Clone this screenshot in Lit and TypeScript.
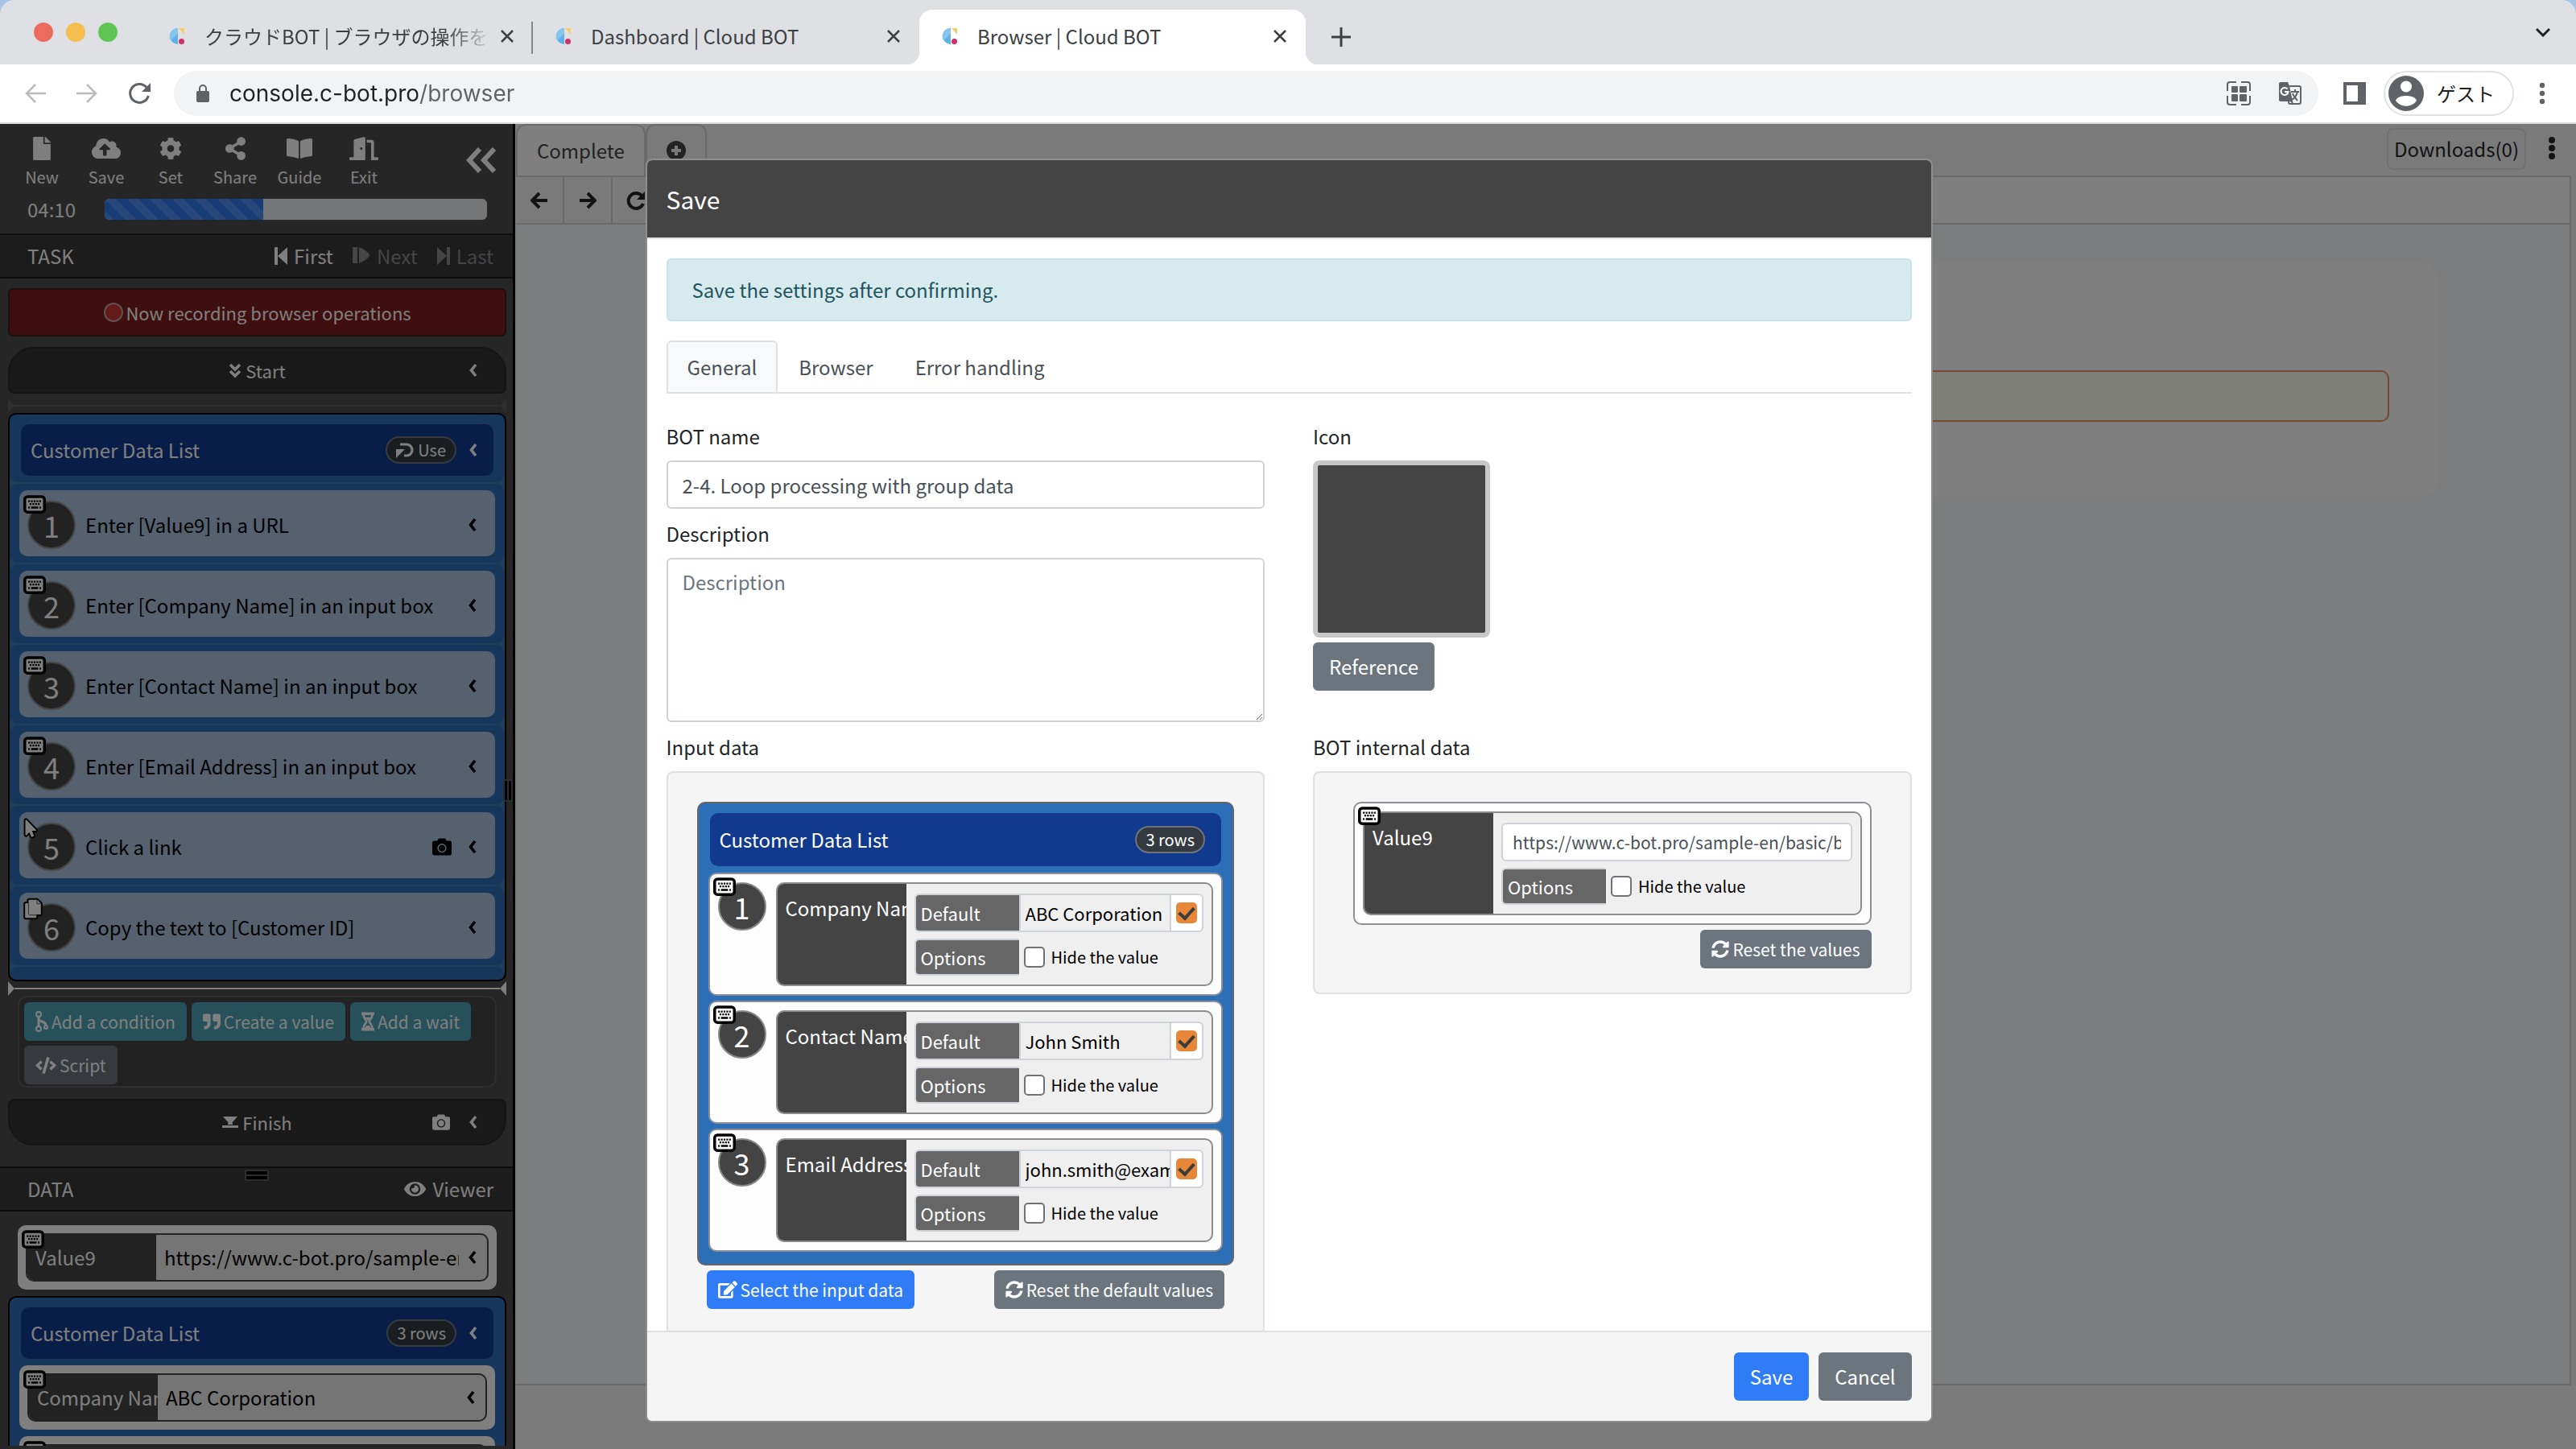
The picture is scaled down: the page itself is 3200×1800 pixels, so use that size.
import { LitElement, html, svg, css, nothing } from "lit";
import { customElement } from "lit/decorators.js";
import { classMap } from "lit/directives/class-map.js";

type Glyph = { box: string; body: unknown };

const p = (d: string) => svg`<path d=${d} fill="currentColor" fill-rule="evenodd"></path>`;

const GLYPHS: Record<string, Glyph> = {
  file: { box: "0 0 384 512", body: p("M224 136V0H24C10.7 0 0 10.7 0 24v464c0 13.3 10.7 24 24 24h336c13.3 0 24-10.7 24-24V160H248c-13.2 0-24-10.8-24-24zm160-14.1v6.1H256V0h6.1c6.4 0 12.5 2.5 17 7l97.9 98c4.5 4.5 7 10.6 7 16.9z") },
  cloud: { box: "0 0 640 512", body: p("M537.6 226.6c4.1-10.7 6.4-22.4 6.4-34.6 0-53-43-96-96-96-19.7 0-38.1 6-53.3 16.2C367 64.2 315.3 32 256 32c-88.4 0-160 71.6-160 160 0 2.7.1 5.4.2 8.1C40.2 219.8 0 273.2 0 336c0 79.5 64.5 144 144 144h368c70.7 0 128-57.3 128-128 0-61.9-44-113.6-102.4-125.4zM393.4 288H328v112c0 8.8-7.2 16-16 16h-48c-8.8 0-16-7.2-16-16V288h-65.4c-14.3 0-21.4-17.2-11.3-27.3l105.4-105.4c6.2-6.2 16.4-6.2 22.6 0l105.4 105.4c10.1 10.1 2.9 27.3-11.3 27.3z") },
  cog: { box: "0 0 512 512", body: p("M487.4 315.7l-42.6-24.6c4.3-23.2 4.3-47 0-70.2l42.6-24.6c4.9-2.8 7.1-8.6 5.5-14-11.1-35.6-30-67.8-54.7-94.6-3.8-4.1-10-5.1-14.8-2.3L380.8 110c-17.9-15.4-38.5-27.3-60.8-35.1V25.8c0-5.6-3.9-10.5-9.4-11.7-36.7-8.2-74.3-7.8-109.2 0-5.5 1.2-9.4 6.1-9.4 11.7V75c-22.2 7.9-42.8 19.8-60.8 35.1L88.7 85.5c-4.9-2.8-11-1.9-14.8 2.3-24.7 26.7-43.6 58.9-54.7 94.6-1.7 5.4.6 11.2 5.5 14L67.3 221c-4.3 23.2-4.3 47 0 70.2l-42.6 24.6c-4.9 2.8-7.1 8.6-5.5 14 11.1 35.6 30 67.8 54.7 94.6 3.8 4.1 10 5.1 14.8 2.3l42.6-24.6c17.9 15.4 38.5 27.3 60.8 35.1v49.2c0 5.6 3.9 10.5 9.4 11.7 36.7 8.2 74.3 7.8 109.2 0 5.5-1.2 9.4-6.1 9.4-11.7v-49.2c22.2-7.9 42.8-19.8 60.8-35.1l42.6 24.6c4.9 2.8 11 1.9 14.8-2.3 24.7-26.7 43.6-58.9 54.7-94.6 1.5-5.5-.7-11.3-5.6-14.1zM256 336c-44.1 0-80-35.9-80-80s35.9-80 80-80 80 35.9 80 80-35.9 80-80 80z") },
  share: { box: "0 0 448 512", body: p("M352 320c-22.608 0-43.387 7.819-59.79 20.895l-102.486-64.054a96.551 96.551 0 0 0 0-41.683l102.486-64.054C308.613 184.181 329.392 192 352 192c53.019 0 96-42.981 96-96S405.019 0 352 0s-96 42.981-96 96c0 7.158.79 14.13 2.276 20.841L155.79 180.895C139.387 167.819 118.608 160 96 160c-53.019 0-96 42.981-96 96s42.981 96 96 96c22.608 0 43.387-7.819 59.79-20.895l102.486 64.054A96.301 96.301 0 0 0 256 416c0 53.019 42.981 96 96 96s96-42.981 96-96-42.981-96-96-96z") },
  book: { box: "0 0 576 512", body: p("M542.22 32.05c-54.8 3.11-163.72 14.43-230.96 55.59-4.64 2.84-7.27 7.89-7.27 13.17v363.87c0 11.55 12.63 18.85 23.28 13.49 69.18-34.82 169.23-44.32 218.7-46.92 16.89-.89 30.02-14.43 30.02-30.66V62.75c.01-17.71-15.35-31.74-33.77-30.7zM264.73 87.64C197.5 46.48 88.58 35.17 33.78 32.05 15.36 31.01 0 45.04 0 62.75V400.6c0 16.24 13.13 29.78 30.02 30.66 49.49 2.6 149.59 12.11 218.77 46.95 10.62 5.35 23.21-1.94 23.21-13.46V100.63c0-5.29-2.62-10.14-7.27-12.99z") },
  door: { box: "0 0 640 512", body: p("M624 448h-80V113.5C544 86.2 522.5 64 496 64H384v64h96v384h144c8.8 0 16-7.2 16-16v-32c0-8.8-7.2-16-16-16zM312.2 1l-192 49.9C106 54.7 96 67.8 96 82.8V448H16c-8.8 0-16 7.2-16 16v32c0 8.8 7.2 16 16 16h336V33.2c0-21.6-19.6-37.4-39.8-32.2zM264 288c-13.3 0-24-14.3-24-32s10.7-32 24-32 24 14.3 24 32-10.7 32-24 32z") },
  camera: { box: "0 0 512 512", body: p("M512 144v288c0 26.5-21.5 48-48 48H48c-26.5 0-48-21.5-48-48V144c0-26.5 21.5-48 48-48h88l12.3-32.9c7-18.7 24.9-31.1 44.9-31.1h125.5c20 0 37.9 12.4 44.9 31.1L376 96h88c26.5 0 48 21.5 48 48zM376 288c0-66.2-53.8-120-120-120s-120 53.8-120 120 53.8 120 120 120 120-53.8 120-120zm-32 0c0 48.5-39.5 88-88 88s-88-39.5-88-88 39.5-88 88-88 88 39.5 88 88z") },
  eye: { box: "0 0 576 512", body: p("M572.52 241.4C518.29 135.59 410.93 64 288 64S57.68 135.64 3.48 241.41a32.35 32.35 0 0 0 0 29.19C57.71 376.41 165.07 448 288 448s230.32-71.64 284.52-177.41a32.35 32.35 0 0 0 0-29.19zM288 400a144 144 0 1 1 144-144 143.93 143.93 0 0 1-144 144zm0-240a95.31 95.31 0 0 0-25.31 3.79 47.85 47.85 0 0 1-66.9 66.9A95.78 95.78 0 1 0 288 160z") },
  quote: { box: "0 0 512 512", body: p("M464 32H336c-26.5 0-48 21.5-48 48v128c0 26.5 21.5 48 48 48h80v64c0 35.3-28.7 64-64 64h-8c-13.3 0-24 10.7-24 24v48c0 13.3 10.7 24 24 24h8c88.4 0 160-71.6 160-160V80c0-26.5-21.5-48-48-48zm-288 0H48C21.5 32 0 53.5 0 80v128c0 26.5 21.5 48 48 48h80v64c0 35.3-28.7 64-64 64h-8c-13.3 0-24 10.7-24 24v48c0 13.3 10.7 24 24 24h8c88.4 0 160-71.6 160-160V80c0-26.5-21.5-48-48-48z") },
  edit: { box: "0 0 576 512", body: p("M402.6 83.2l90.2 90.2c3.8 3.8 3.8 10 0 13.8L274.4 405.6l-92.8 10.3c-12.4 1.4-22.9-9.1-21.5-21.5l10.3-92.8L388.8 83.2c3.8-3.8 10-3.8 13.8 0zm162-22.9l-48.8-48.8c-15.2-15.2-39.9-15.2-55.2 0l-35.4 35.4c-3.8 3.8-3.8 10 0 13.8l90.2 90.2c3.8 3.8 10 3.8 13.8 0l35.4-35.4c15.2-15.3 15.2-40 0-55.2zM384 346.2V448H64V128h229.8c3.2 0 6.2-1.3 8.5-3.5l40-40c7.6-7.6 2.2-20.5-8.5-20.5H48C21.5 64 0 85.5 0 112v352c0 26.5 21.5 48 48 48h352c26.5 0 48-21.5 48-48V306.2c0-10.7-12.9-16-20.5-8.5l-40 40c-2.2 2.3-3.5 5.3-3.5 8.5z") },
  sync: { box: "0 0 512 512", body: p("M370.72 133.28C339.458 104.008 298.888 87.962 255.848 88c-77.458.068-144.328 53.178-162.791 126.85-1.344 5.363-6.122 9.15-11.651 9.15H24.103c-7.498 0-13.194-6.807-11.807-14.176C33.933 94.924 134.813 8 256 8c66.448 0 126.791 26.136 171.315 68.685L463.03 40.97C478.149 25.851 504 36.559 504 57.941V192c0 13.255-10.745 24-24 24H345.941c-21.382 0-32.09-25.851-16.971-40.971l41.75-41.749zM32 296h134.059c21.382 0 32.09 25.851 16.971 40.971l-41.75 41.75c31.262 29.273 71.835 45.319 114.876 45.28 77.418-.07 144.315-53.144 162.787-126.849 1.344-5.363 6.122-9.15 11.651-9.15h57.304c7.498 0 13.194 6.807 11.807 14.176C478.067 417.076 377.187 504 256 504c-66.448 0-126.791-26.136-171.315-68.685L48.97 471.03C33.851 486.149 8 475.441 8 454.059V320c0-13.255 10.745-24 24-24z") },
  code: { box: "0 0 640 512", body: p("M278.9 511.5l-61-17.7c-6.4-1.8-10-8.5-8.2-14.9L346.2 8.7c1.8-6.4 8.5-10 14.9-8.2l61 17.7c6.4 1.8 10 8.5 8.2 14.9L293.8 503.3c-1.9 6.4-8.5 10.1-14.9 8.2zm-114-112.2l43.5-46.4c4.6-4.9 4.3-12.7-.8-17.2L117 256l90.6-79.7c5.1-4.5 5.5-12.3.8-17.2l-43.5-46.4c-4.5-4.8-12.1-5.1-17-.5L3.8 247.2c-5.1 4.7-5.1 12.8 0 17.5l144.1 135.1c4.9 4.6 12.5 4.4 17-.5zm327.2.6l144.1-135.1c5.1-4.7 5.1-12.8 0-17.5L492.1 112.1c-4.8-4.5-12.4-4.3-17 .5L431.6 159c-4.6 4.9-4.3 12.7.8 17.2L523 256l-90.6 79.7c-5.1 4.5-5.5 12.3-.8 17.2l43.5 46.4c4.5 4.9 12.1 5.1 17 .6z") },
  branch: { box: "0 0 16 26", body: svg`<g fill="none" stroke="currentColor" stroke-width="2"><circle cx="4" cy="4" r="3"></circle><circle cx="4" cy="22" r="3"></circle><circle cx="13" cy="20" r="2"></circle><path d="M4 7v12M4 10c1 4 9 2 9 8" stroke-width="3"></path></g>` },
  hourglass: { box: "0 0 18 26", body: svg`<path d="M0 0h18v4H0zM0 22h18v4H0z" fill="currentColor"></path><path d="M3 4c0 5 4 7 4 9s-4 4-4 9M15 4c0 5-4 7-4 9s4 4 4 9" fill="none" stroke="currentColor" stroke-width="3"></path><path d="M5 7h8l-4 5zM5 22c1-5 7-5 8 0z" fill="currentColor"></path>` },
  keyboard: { box: "0 0 32 26", body: svg`<rect x="2" y="2" width="28" height="22" rx="4" fill="#fff" stroke="#000" stroke-width="4"></rect><path d="M7 8.500h18M9 12.500h14" stroke="#000" stroke-width="2.500" stroke-dasharray="2.500 1.400"></path><path d="M7 17.500h2M11 17.500h10M23 17.500h2" stroke="#000" stroke-width="3"></path>` },
  pointer: { box: "-60 -50 430 612", body: svg`<path d="M302 329H196l56 136c4 9 0 20-9 24l-49 21c-9 4-20-1-24-10l-53-129-86 89C19 473 0 464 0 448V18C0 2 20-6 30 5l285 293c11 11 3 31-13 31z" fill="#fff" stroke="#000" stroke-width="90" paint-order="stroke" stroke-linejoin="round"></path>` },
  copy: { box: "-50 -50 548 612", body: svg`<path d="M320 448v40c0 13-11 24-24 24H24c-13 0-24-11-24-24V120c0-13 11-24 24-24h72V24c0-13 11-24 24-24h224l104 104v288c0 13-11 24-24 24H320z" fill="#fff" stroke="#000" stroke-width="90" paint-order="stroke" stroke-linejoin="round"></path><path d="M96 96v296c0 31 25 40 40 40h184M336 0v112h112" fill="none" stroke="#444" stroke-width="20"></path>` },
  chevron: { box: "0 0 10 18", body: svg`<path d="M8 2L2.500 9 8 16" fill="none" stroke="currentColor" stroke-width="3.600"></path>` },
  collapse: { box: "0 0 38 32", body: svg`<path d="M17 2L4 16l13 14M35 2L22 16l13 14" fill="none" stroke="currentColor" stroke-width="6"></path>` },
  down: { box: "0 0 16 18", body: svg`<path d="M2 2l6 6 6-6M2 10l6 6 6-6" fill="none" stroke="currentColor" stroke-width="3.600"></path>` },
  finish: { box: "0 0 20 14", body: svg`<path d="M1 0h18l-7 8h-4zM0 11h20v3H0z" fill="currentColor"></path><path d="M7 8h6v2H7z" fill="currentColor"></path>` },
  first: { box: "0 0 16 22", body: svg`<path d="M0 0h4v22H0zM16 0v22L4 11z" fill="currentColor"></path>` },
  next: { box: "0 0 22 22", body: svg`<path d="M0 0h6v20H0zM8 0c8 3 13 8 13 10s-5 7-13 10z" fill="currentColor"></path>` },
  last: { box: "0 0 16 22", body: svg`<path d="M12 0h4v22h-4zM0 0v22l12-11z" fill="currentColor"></path>` },
  record: { box: "0 0 26 26", body: svg`<circle cx="13" cy="13" r="11" fill="#c43630" stroke="currentColor" stroke-width="2"></circle>` },
  loop: { box: "0 0 22 20", body: svg`<path d="M5 3h8a6 6 0 0 1 0 14H10" fill="none" stroke="currentColor" stroke-width="3.200"></path><path d="M0 9h11L0 20z" fill="currentColor"></path>` },
  plusDisc: { box: "0 0 24 24", body: svg`<circle cx="12" cy="12" r="12" fill="currentColor"></circle><path d="M12 6v12M6 12h12" stroke="#f4f4f4" stroke-width="4"></path>` },
  arrowLeft: { box: "0 0 22 22", body: svg`<path d="M21 11H3M11 2l-9 9 9 9" fill="none" stroke="currentColor" stroke-width="4"></path>` },
  arrowRight: { box: "0 0 22 22", body: svg`<path d="M1 11h18M11 2l9 9-9 9" fill="none" stroke="currentColor" stroke-width="4"></path>` },
  reloadBold: { box: "0 0 24 24", body: svg`<path d="M20 7a9.500 9.500 0 1 0 1 9" fill="none" stroke="currentColor" stroke-width="4"></path><path d="M23 1v10H13z" fill="currentColor"></path>` },
  navBack: { box: "0 0 26 26", body: svg`<path d="M26 13H2M13 2L2 13l11 11" fill="none" stroke="currentColor" stroke-width="2.500"></path>` },
  navForward: { box: "0 0 26 26", body: svg`<path d="M0 13h24M13 2l11 11-11 11" fill="none" stroke="currentColor" stroke-width="2.500"></path>` },
  reload: { box: "0 0 28 28", body: svg`<path d="M23 6.500A11.500 11.500 0 1 0 25.300 17" fill="none" stroke="currentColor" stroke-width="3"></path><path d="M28 1v11H17z" fill="currentColor"></path>` },
  lock: { box: "0 0 16 22", body: svg`<rect y="8" width="16" height="14" rx="2" fill="currentColor"></rect><path d="M4 9V5a4 4 0 0 1 8 0v4" fill="none" stroke="currentColor" stroke-width="2"></path>` },
  close: { box: "0 0 16 16", body: svg`<path d="M1 1l14 14M15 1L1 15" stroke="currentColor" stroke-width="2.500"></path>` },
  plus: { box: "0 0 24 24", body: svg`<path d="M12 0v24M0 12h24" stroke="currentColor" stroke-width="3"></path>` },
  menuDown: { box: "0 0 18 12", body: svg`<path d="M1 2l8 8 8-8" fill="none" stroke="currentColor" stroke-width="3"></path>` },
  dots: { box: "0 0 8 28", body: svg`<g fill="currentColor"><circle cx="4" cy="4" r="3.200"></circle><circle cx="4" cy="14" r="3.200"></circle><circle cx="4" cy="24" r="3.200"></circle></g>` },
  dotsBold: { box: "0 0 8 28", body: svg`<g fill="currentColor"><circle cx="4" cy="4" r="4"></circle><circle cx="4" cy="14" r="4"></circle><circle cx="4" cy="24" r="4"></circle></g>` },
  qr: { box: "0 0 30 30", body: svg`<path d="M1 12V4a3 3 0 0 1 3-3h8M18 1h8a3 3 0 0 1 3 3v8M29 18v8a3 3 0 0 1-3 3h-8M12 29H4a3 3 0 0 1-3-3v-8" fill="none" stroke="currentColor" stroke-width="2"></path><g fill="currentColor"><rect x="6" y="6" width="8" height="8" rx="1"></rect><rect x="16" y="6" width="9" height="8" rx="1"></rect><rect x="6" y="16" width="8" height="9" rx="1"></rect><rect x="16" y="16" width="9" height="9" rx="1"></rect></g>` },
  translate: { box: "0 0 28 28", body: svg`<rect x="12" y="5" width="15" height="22" rx="2" fill="none" stroke="currentColor" stroke-width="2"></rect><path d="M15 12h10M20 9v3M23 12c-1 5-4 8-7 10M17 14c1 4 4 6 6 9" fill="none" stroke="currentColor" stroke-width="2"></path><path d="M2 0h9l2 5 5 23-4-4H2a2 2 0 0 1-2-2V2a2 2 0 0 1 2-2z" fill="currentColor"></path><path d="M10.500 8.500A4.500 4.500 0 1 0 11.500 12H7" fill="none" stroke="#fff" stroke-width="2"></path>` },
  panel: { box: "0 0 28 28", body: svg`<path d="M0 0h28v28H0zM4 4v20h14V4z" fill="currentColor" fill-rule="evenodd"></path>` },
  avatar: { box: "0 0 44 44", body: svg`<circle cx="22" cy="22" r="22" fill="currentColor"></circle><circle cx="22" cy="13.500" r="7" fill="#fff"></circle><path d="M9 31c2-8 24-8 26 0-6 9-20 9-26 0z" fill="#fff"></path>` },
  brand: { box: "0 0 20 20", body: svg`<path d="M11 0A10 10 0 0 0 11 20z" fill="#5db2e6"></path><path d="M11 0A10 10 0 0 0 2 15L11 7z" fill="#86c5ec"></path><path d="M12 0h7v8z" fill="#f3cf63"></path><circle cx="15.500" cy="16.500" r="3.500" fill="#d32d6c"></circle>` },
};

const icon = (name: string, w: number, h: number) =>
  html`<svg class="icon" width=${w} height=${h} viewBox=${GLYPHS[name].box} aria-hidden="true">${GLYPHS[name].body}</svg>`;

const SITE = "https://www.c-bot.pro/sample-en/basic/b";

const BROWSER_TABS = [
  { title: "クラウドBOT | ブラウザの操作を自", active: false },
  { title: "Dashboard | Cloud BOT", active: false },
  { title: "Browser | Cloud BOT", active: true },
];

const TOOLS = [
  { label: "New", glyph: "file", w: 22 },
  { label: "Save", glyph: "cloud", w: 36 },
  { label: "Set", glyph: "cog", w: 28 },
  { label: "Share", glyph: "share", w: 25 },
  { label: "Guide", glyph: "book", w: 32 },
  { label: "Exit", glyph: "door", w: 36 },
];

const STEPS = [
  { text: "Enter [Value9] in a URL", badge: "keyboard", shot: false },
  { text: "Enter [Company Name] in an input box", badge: "keyboard", shot: false },
  { text: "Enter [Contact Name] in an input box", badge: "keyboard", shot: false },
  { text: "Enter [Email Address] in an input box", badge: "keyboard", shot: false },
  { text: "Click a link", badge: "pointer", shot: true },
  { text: "Copy the text to [Customer ID]", badge: "copy", shot: false },
];

const BADGE_SIZE: Record<string, [number, number]> = {
  keyboard: [28, 23],
  pointer: [18, 28],
  copy: [24, 28],
};

const FIELDS = [
  { name: "Company Name", value: "ABC Corporation" },
  { name: "Contact Name", value: "John Smith" },
  { name: "Email Address", value: "john.smith@example.com" },
];

@customElement("app-root")
export class AppRoot extends LitElement {
  static styles = css`
    :host {
      display: flex;
      flex-direction: column;
      height: 100vh;
      overflow: hidden;
      background: #a9c4e6;
      font-family: "Noto Sans CJK JP", "Noto Sans", sans-serif;
      font-size: 24px;
      line-height: 36px;
      color: #212529;
    }
    * { box-sizing: border-box; }
    button, input, textarea { font: inherit; color: inherit; margin: 0; }
    button { border: 0; padding: 0; background: none; display: flex; align-items: center; white-space: nowrap; }
    .icon { display: block; flex: none; }
    .grow { flex: 1; min-width: 0; }

    /* browser chrome */
    .tabstrip { display: flex; align-items: flex-end; height: 80px; background: #dee0e4; color: #3c4043; border-radius: 18px 18px 0 0; flex: none; }
    .lights { display: flex; gap: 16px; padding: 0 36px 0 42px; height: 80px; align-items: center; }
    .light { width: 24px; height: 24px; border-radius: 50%; background: #ed6a5f; }
    .light.amber { background: #f5bf4f; }
    .light.green { background: #61c554; }
    .tab { position: relative; display: flex; align-items: center; width: 15%; height: 68px; padding: 0 24px 2px 28px; gap: 24px; border-radius: 16px 16px 0 0; }
    .tab.ruled::after { content: ""; position: absolute; right: 0; top: 15px; width: 2px; height: 40px; background: #85888c; }
    .tab.active { background: #fff; }
    .tab.active::before, .tab.active::after { content: ""; position: absolute; bottom: 0; width: 16px; height: 16px; }
    .tab.active::before { left: -16px; background: radial-gradient(circle at 0 0, transparent 16px, #fff 17px); }
    .tab.active::after { right: -16px; background: radial-gradient(circle at 100% 0, transparent 16px, #fff 17px); }
    .tabname { flex: 1; min-width: 0; overflow: hidden; white-space: nowrap; margin-right: -8px; }
    .tabname.fade { -webkit-mask-image: linear-gradient(90deg, #000 85%, transparent 102%); }
    .newtab { height: 68px; padding: 0 32px; }
    .tabmenu { height: 80px; margin: 0 32px 0 auto; color: #202124; }
    .toolbar { display: flex; align-items: center; height: 74px; background: #fff; border-bottom: 2px solid #d8dadd; padding: 0 38px 0 31px; color: #5f6368; flex: none; }
    .navs { display: flex; gap: 38px; padding-right: 29px; }
    .dim { color: #b9bbbe; }
    .address { flex: 1; display: flex; align-items: center; height: 56px; border-radius: 28px; background: #f1f3f4; padding: 0 21px 0 28px; gap: 25px; margin-right: 31px; }
    .url { flex: 1; border: 0; padding: 0; outline: 0; font-family: Inter, Roboto, sans-serif; font-size: 28px; height: 40px; color: #202124; background: linear-gradient(90deg, #202124 234px, #5f6368 234px); -webkit-background-clip: text; background-clip: text; -webkit-text-fill-color: transparent; }
    .extras { display: flex; gap: 35px; }
    .guest { display: flex; gap: 16px; height: 56px; border: 2px solid #e0e2e5; border-radius: 28px; padding: 0 22px 0 4px; margin: 0 31px 0 22px; }
    .guesttext { color: #202124; }

    /* workspace */
    .work { position: relative; flex: 1; min-height: 0; display: flex; background: #f4f4f4; }
    .side { position: relative; flex: 0 0 20%; min-width: 0; display: flex; flex-direction: column; background: #4c4c4c; color: #fff; border-right: 3px solid #000; overflow: hidden; }
    .tools { display: flex; align-items: center; padding: 16px 20px 0 12px; }
    .tool { flex-direction: column; width: 80px; gap: 6px; font-size: 20px; line-height: 30px; }
    .collapse { margin-left: auto; margin-bottom: 8px; }
    .timer { display: flex; align-items: center; gap: 36px; padding: 7px 32px 12px 34px; }
    .bar { flex: 1; height: 26px; border-radius: 6px; background: #e9ecef; overflow: hidden; }
    .fill { height: 100%; background-color: #3078f0; background-image: linear-gradient(45deg, rgba(255,255,255,.15) 25%, transparent 25%, transparent 50%, rgba(255,255,255,.15) 50%, rgba(255,255,255,.15) 75%, transparent 75%); background-size: 28px 28px; }
    .strip { position: relative; flex: none; display: flex; align-items: center; height: 56px; background: #383838; border-top: 2px solid #1c1c1c; border-bottom: 2px solid #1c1c1c; padding: 0 24px 0 34px; }
    .steps { display: flex; gap: 24px; margin-left: auto; }
    .steps button, .viewer { gap: 8px; }
    .off { color: #8a8a8a; }
    .tasks { display: flex; flex-direction: column; padding: 12px 8px 26px 10px; }
    .recording { display: flex; align-items: center; justify-content: center; gap: 2px; height: 60px; background: #7c1e1c; border: 2px solid #3a2020; border-radius: 6px; font-size: 22px; }
    .recording .icon { color: #c0a0a0; }
    .terminal { display: grid; grid-template-columns: 1fr auto 1fr; align-items: center; height: 58px; padding: 0 34px; background: #333; border: 2px solid #2a2a2a; width: 100%; border-radius: 32px 32px 8px 8px; margin-top: 13px; font-size: 22px; }
    .terminal.end { border-radius: 8px 8px 32px 32px; margin-top: 14px; }
    .middle { grid-column: 2; display: flex; align-items: center; gap: 5px; }
    .trail { display: flex; align-items: center; justify-content: flex-end; gap: 24px; }
    .insert { display: flex; align-items: center; height: 18px; color: #5e5e5e; flex: none; }
    .insert.gap { margin-top: 6px; }
    .insert.blue { color: #3d7cb8; }
    .insert.lit { color: #fff; }
    .insert::before, .insert::after { content: ""; border: 9px solid transparent; border-width: 9px 0 9px 8px; border-left-color: currentColor; }
    .insert::after { border-width: 9px 8px 9px 0; border-left-color: transparent; border-right-color: currentColor; }
    .rule { flex: 1; height: 2px; background: currentColor; }
    .group { background: #2c6fb6; border: 2px solid #000; border-radius: 10px; padding: 12px 0 8px; }
    .grouphead { display: flex; align-items: center; height: 64px; margin: 0 14px; padding: 0 20px 0 12px; border-radius: 10px; background: #113a8e; color: #fff; gap: 16px; }
    .pill { display: flex; align-items: center; gap: 5px; height: 34px; padding: 0 11px; font-size: 20px; line-height: 30px; border: 2px solid #6c757d; border-radius: 17px; background: #343a40; color: #fff; }
    .card { position: relative; display: flex; align-items: center; height: 82px; margin: 0 12px; padding: 4px 23px 0 10px; border-radius: 10px; background: #aac2dc; color: #000; gap: 12px; }
    .badge { position: absolute; left: 5px; top: 6px; }
    .num { flex: none; display: flex; align-items: center; justify-content: center; width: 60px; height: 60px; border-radius: 50%; border: 2px solid #888; background: #444; color: #fff; font-size: 36px; line-height: 52px; }
    .cardtext { flex: 1; white-space: nowrap; }
    .shot { margin-right: 9px; }
    .adders { display: flex; flex-wrap: wrap; gap: 6px; margin: 0 12px; height: 114px; padding: 6px; border: 2px solid #5c5c5c; border-radius: 12px; background: #454545; }
    .btn { height: 48px; padding: 0 14px; gap: 4px; border-radius: 6px; font-size: 21px; color: #fff; background: #4ca0b4; }
    .btn.gray { background: #6c757d; }
    .btn.primary { background: #2f7cf6; }
    .btn.big { height: 60px; font-size: 24px; padding: 0 20px; }
    .data { display: flex; flex-direction: column; padding: 17px 8px 0 10px; flex: 1; min-height: 0; overflow: hidden; }
    .data .grouphead { margin-bottom: 8px; }
    .value { position: relative; flex: none; display: flex; height: 80px; padding: 10px; border-radius: 10px; background: #fff; color: #000; margin: 0 12px 8px; }
    .valuebox { flex: 1; min-width: 0; display: flex; border: 2px solid #444; border-radius: 10px; overflow: hidden; background: #eaeaea; align-items: center; }
    .key { flex: none; align-self: stretch; display: flex; align-items: center; width: 160px; background: #444; color: #fff; padding-left: 10px; overflow: hidden; white-space: nowrap; }
    .val { flex: 1; min-width: 0; overflow: hidden; white-space: nowrap; margin: 0 12px 0 10px; }
    .valuebox > .icon { margin-right: 13px; }
    .foot { height: 4px; background: #4c4c4c; flex: none; }
    .hgrip { position: absolute; top: 2px; left: 50%; margin-left: -15px; width: 30px; height: 14px; border: 2px solid #5a5a5a; background: linear-gradient(#000 4px, #5a5a5a 4px, #5a5a5a 6px, #000 6px); border-radius: 2px; }
    .vgrip { position: absolute; right: 0; top: 814px; width: 12px; height: 28px; border: 2px solid #5a5a5a; background: linear-gradient(90deg, #000 3px, #5a5a5a 3px, #5a5a5a 5px, #000 5px); border-radius: 2px; }

    .main { flex: 1; min-width: 0; display: flex; flex-direction: column; padding: 0 6px 0 1px; }
    .pages { display: flex; align-items: flex-end; height: 66px; border-bottom: 2px solid #d2d4d8; }
    .page { height: 64px; padding: 0 24px; border: 2px solid #d2d4d8; border-bottom: 0; border-radius: 12px 12px 0 0; color: #444; }
    .page.current { background: #fff; }
    .downloads { height: 52px; border: 2px solid #e0e2e6; border-radius: 8px; padding: 0 7px; align-self: center; margin: 0 28px 2px auto; }
    .kebab { align-self: center; padding: 0 20px 4px 0; }
    .frame { flex: 1; display: flex; flex-direction: column; border-right: 2px solid #d2d4d8; border-bottom: 2px solid #d2d4d8; background: #f8faff; margin-bottom: 79px; }
    .actions { display: flex; height: 59px; background: #fff; border-bottom: 2px solid #d2d4d8; }
    .actions button { width: 60px; justify-content: center; background: #f4f4f4; border-right: 2px solid #d2d4d8; color: #212529; }
    .site { margin: 47px 164px; height: 291px; border-radius: 20px; background: #fff; padding: 134px 60px 0; }
    .siteinput { width: 100%; height: 64px; border: 2px solid #f0906c; border-radius: 10px; background: #fffff4; display: block; }

    /* dialog */
    .backdrop { position: absolute; inset: 0; display: flex; justify-content: center; background: rgba(0, 0, 0, 0.5); padding: 43px 0 33px 2px; }
    .dialog { width: 50%; display: flex; flex-direction: column; background: #fff; background-clip: padding-box; border: 2px solid #8e8e8e; border-radius: 8px; overflow: hidden; }
    .head { flex: none; height: 98px; display: flex; align-items: center; padding: 0 24px; margin: 0; background: #444; color: #fff; border-bottom: 2px solid #dee2e6; font-size: 30px; font-weight: 400; line-height: 44px; }
    .body { flex: 1; min-height: 0; overflow: hidden; padding: 24px 24px 0; }
    .alert { height: 78px; display: flex; align-items: center; padding: 0 30px; border: 2px solid #c3e4ea; border-radius: 6px; background: #d7eaee; color: #1f5560; }
    .formtabs { display: flex; margin-top: 24px; border-bottom: 2px solid #dee0e4; color: #495057; }
    .formtab { height: 64px; padding: 0 24px; border: 2px solid transparent; border-bottom: 0; border-radius: 6px 6px 0 0; }
    .formtab.current { background: #f8f9fb; border-color: #dee0e4; }
    .form { display: grid; grid-template-columns: minmax(0, 1fr) minmax(0, 1fr); column-gap: 60px; padding-top: 22px; align-items: start; }
    .label { display: block; margin: 12px 0 11px; line-height: 38px; color: #212529; }
    .text { display: block; width: 100%; height: 60px; border: 2px solid #cfd2d8; border-radius: 6px; background: #fff; color: #495057; padding: 0 18px; outline: 0; }
    .text.area { height: 204px; padding: 10px 18px; resize: vertical; }
    .text::placeholder { color: #6c757d; opacity: 1; }
    .text.small { font-size: 21px; height: 48px; padding: 0 12px; }
    .swatch { width: 220px; height: 220px; border: 6px solid #c8c8c8; border-radius: 8px; background: #444; margin-bottom: 6px; }
    .well { border: 2px solid #dee0e4; border-radius: 8px; background: #f5f5f5; padding: 36px 36px 30px; }
    .well.inset { padding: 36px 48px 30px; }
    .well .group { border-color: #666; padding: 12px 12px 15px; }
    .well .grouphead { height: 66px; margin: 0 2px 8px; }
    .entry { position: relative; display: flex; gap: 12px; padding: 10px; border: 2px solid #8c9096; border-radius: 10px; background: #fdfdfd; align-items: flex-start; }
    .entry + .entry { margin-top: 6px; }
    .entry .badge { left: 4px; top: 4px; }
    .entrybox { flex: 1; min-width: 0; display: flex; border: 2px solid #8c8c8c; border-radius: 10px; background: #efefef; overflow: hidden; color: #000; height: 129px; }
    .entrybox .key { align-items: flex-start; padding-top: 12px; }
    .opts { flex: 1; min-width: 0; padding: 12px 10px 10px; display: flex; flex-direction: column; gap: 8px; }
    .optrow { display: flex; align-items: stretch; height: 48px; }
    .optrow.low { height: 46px; align-items: center; }
    .optlabel { width: 130px; flex: none; align-self: stretch; display: flex; align-items: center; padding-left: 6px; background: #666; color: #fff; font-size: 22px; border: 2px solid #ced4da; border-right: 0; border-radius: 6px 0 0 6px; }
    .optvalue { flex: 1; min-width: 0; border: 2px solid #ced4da; border-right: 0; background: #efefef; color: #000; padding: 0 0 0 6px; font-size: 22px; outline: 0; border-radius: 0; }
    .checkcell { width: 42px; display: flex; align-items: center; justify-content: center; background: #fff; border: 2px solid #ced4da; border-radius: 0 6px 6px 0; }
    .check { appearance: none; width: 26px; height: 26px; border: 2px solid #6f7276; border-radius: 5px; background: #fff; flex: none; }
    .check:checked { border-color: #e88738; background: #e88738; display: grid; place-items: center; }
    .check:checked::after { content: ""; width: 8px; height: 15px; border: solid #3c3c3c; border-width: 0 4px 4px 0; transform: rotate(42deg); margin-top: -4px; }
    .hide { display: flex; align-items: center; gap: 8px; font-size: 20px; line-height: 30px; margin-left: 6px; }
    .row { display: flex; justify-content: space-between; padding: 6px 12px 0; }
    .row.end { justify-content: flex-end; padding: 6px 0 0; }
    .footer { flex: none; display: flex; justify-content: flex-end; align-items: center; gap: 12px; height: 112px; padding: 0 24px; background: #f5f5f5; border-top: 2px solid #dee0e4; }
  `;

  private insertLine(kind = "") {
    return html`<div class="insert ${kind}"><span class="rule"></span></div>`;
  }

  private badge(name: string) {
    const [w, h] = BADGE_SIZE[name];
    return html`<span class="badge">${icon(name, w, h)}</span>`;
  }

  private chrome() {
    return html`
      <header class="tabstrip">
        <div class="lights"><span class="light"></span><span class="light amber"></span><span class="light green"></span></div>
        ${BROWSER_TABS.map(
          (t, i) => html`<div class=${classMap({ tab: true, active: t.active, ruled: i === 0 })}>
            ${icon("brand", 20, 20)}<span class=${classMap({ tabname: true, fade: i === 0 })}>${t.title}</span>
            <button aria-label="Close tab">${icon("close", 16, 16)}</button>
          </div>`,
        )}
        <button class="newtab" aria-label="New tab">${icon("plus", 24, 24)}</button>
        <button class="tabmenu" aria-label="Search tabs">${icon("menuDown", 18, 12)}</button>
      </header>
      <div class="toolbar">
        <div class="navs">
          <button class="dim" aria-label="Back">${icon("navBack", 26, 26)}</button>
          <button class="dim" aria-label="Forward">${icon("navForward", 26, 26)}</button>
          <button aria-label="Reload">${icon("reload", 28, 28)}</button>
        </div>
        <div class="address">
          ${icon("lock", 16, 22)}
          <input class="url" aria-label="Address" .value=${"console.c-bot.pro/browser"} />
          <div class="extras">
            <button aria-label="QR code">${icon("qr", 30, 30)}</button>
            <button aria-label="Translate">${icon("translate", 28, 28)}</button>
          </div>
        </div>
        <button aria-label="Side panel">${icon("panel", 28, 28)}</button>
        <button class="guest">${icon("avatar", 44, 44)}<span class="guesttext">ゲスト</span></button>
        <button aria-label="Menu">${icon("dots", 8, 28)}</button>
      </div>
    `;
  }

  private groupHead(pill: unknown, chevron: boolean) {
    return html`<div class="grouphead">
      <span class="grow">Customer Data List</span>
      <span class="pill">${pill}</span>
      ${chevron ? icon("chevron", 10, 18) : nothing}
    </div>`;
  }

  private valueCard(name: string, value: string) {
    return html`<div class="value">
      <div class="valuebox"><span class="key">${name}</span><span class="val">${value}</span>${icon("chevron", 10, 18)}</div>
      ${this.badge("keyboard")}
    </div>`;
  }

  private sidebar() {
    return html`<aside class="side">
      <div class="tools">
        ${TOOLS.map((t) => html`<button class="tool">${icon(t.glyph, t.w, 29)}${t.label}</button>`)}
        <button class="collapse" aria-label="Collapse">${icon("collapse", 38, 32)}</button>
      </div>
      <div class="timer">
        <span>04:10</span>
        <div class="bar"><div class="fill" style="width: 41.500%"></div></div>
      </div>
      <div class="strip">
        <span>TASK</span>
        <div class="steps">
          <button>${icon("first", 16, 22)}First</button>
          <button class="off">${icon("next", 22, 22)}Next</button>
          <button class="off">${icon("last", 16, 22)}Last</button>
        </div>
      </div>
      <div class="tasks">
        <div class="recording">${icon("record", 26, 26)}Now recording browser operations</div>
        <button class="terminal">
          <span class="middle">${icon("down", 16, 20)}Start</span>
          <span class="trail">${icon("chevron", 10, 18)}</span>
        </button>
        ${this.insertLine("gap")}
        <section class="group">
          ${this.groupHead(html`${icon("loop", 22, 20)}Use`, true)}
          ${this.insertLine("blue")}
          ${STEPS.map(
            (s, i) => html`<div class="card">
                <span class="num">${i + 1}</span>
                <span class="cardtext">${s.text}</span>
                ${s.shot ? html`<span class="shot">${icon("camera", 24, 24)}</span>` : nothing}
                ${icon("chevron", 10, 18)}
                ${this.badge(s.badge)}
              </div>
              ${this.insertLine("blue")}`,
          )}
        </section>
        ${this.insertLine("lit")}
        <div class="adders">
          <button class="btn">${icon("branch", 16, 26)}Add a condition</button>
          <button class="btn">${icon("quote", 22, 22)}Create a value</button>
          <button class="btn">${icon("hourglass", 16, 24)}Add a wait</button>
          <button class="btn gray">${icon("code", 26, 21)}Script</button>
        </div>
        <button class="terminal end">
          <span class="middle">${icon("finish", 20, 14)}Finish</span>
          <span class="trail">${icon("camera", 22, 22)}${icon("chevron", 10, 18)}</span>
        </button>
      </div>
      <div class="strip">
        <span class="hgrip"></span>
        <span class="grow">DATA</span>
        <button class="viewer">${icon("eye", 27, 24)}Viewer</button>
      </div>
      <div class="data">
        ${this.valueCard("Value9", SITE)}
        <section class="group">
          ${this.groupHead("3 rows", true)}
          ${FIELDS.slice(0, 2).map((f) => this.valueCard(f.name, f.value))}
        </section>
      </div>
      <div class="foot"></div>
      <span class="vgrip"></span>
    </aside>`;
  }

  private workspace() {
    return html`<main class="main">
      <div class="pages">
        <button class="page current">Complete</button>
        <button class="page" aria-label="Add page">${icon("plusDisc", 24, 24)}</button>
        <button class="downloads">Downloads(0)</button>
        <button class="kebab" aria-label="More">${icon("dotsBold", 8, 28)}</button>
      </div>
      <div class="frame">
        <div class="actions">
          <button aria-label="Go back">${icon("arrowLeft", 22, 22)}</button>
          <button aria-label="Go forward">${icon("arrowRight", 22, 22)}</button>
          <button aria-label="Reload page">${icon("reloadBold", 24, 24)}</button>
        </div>
        <div class="site"><input class="siteinput" aria-label="Search" /></div>
      </div>
    </main>`;
  }

  private hideOption(id: string) {
    return html`<div class="optrow low">
      <span class="optlabel">Options</span>
      <label class="hide" for=${id}><input class="check" type="checkbox" id=${id} />Hide the value</label>
    </div>`;
  }

  private dialog() {
    return html`<div class="backdrop">
      <section class="dialog" role="dialog" aria-labelledby="title">
        <h2 class="head" id="title">Save</h2>
        <div class="body">
          <div class="alert">Save the settings after confirming.</div>
          <div class="formtabs">
            <button class="formtab current">General</button>
            <button class="formtab">Browser</button>
            <button class="formtab">Error handling</button>
          </div>
          <div class="form">
            <div>
              <label class="label" for="name">BOT name</label>
              <input class="text" id="name" .value=${"2-4. Loop processing with group data"} />
              <label class="label" for="description">Description</label>
              <textarea class="text area" id="description" placeholder="Description"></textarea>
            </div>
            <div>
              <span class="label">Icon</span>
              <div class="swatch"></div>
              <button class="btn gray big">Reference</button>
            </div>
            <div>
              <span class="label">Input data</span>
              <div class="well">
                <div class="group">
                  ${this.groupHead("3 rows", false)}
                  ${FIELDS.map(
                    (f, i) => html`<div class="entry">
                      <span class="num">${i + 1}</span>
                      <div class="entrybox">
                        <span class="key">${f.name}</span>
                        <div class="opts">
                          <div class="optrow">
                            <label class="optlabel" for="default${i}">Default</label>
                            <input class="optvalue" id="default${i}" readonly .value=${f.value} />
                            <span class="checkcell"><input class="check" type="checkbox" checked aria-label="Use default" /></span>
                          </div>
                          ${this.hideOption(`hide${i}`)}
                        </div>
                      </div>
                      ${this.badge("keyboard")}
                    </div>`,
                  )}
                </div>
                <div class="row">
                  <button class="btn primary">${icon("edit", 24, 22)}Select the input data</button>
                  <button class="btn gray">${icon("sync", 22, 22)}Reset the default values</button>
                </div>
              </div>
            </div>
            <div>
              <span class="label">BOT internal data</span>
              <div class="well inset">
                <div class="entry">
                  <div class="entrybox">
                    <label class="key" for="value9">Value9</label>
                    <div class="opts">
                      <input class="text small" id="value9" .value=${SITE} />
                      ${this.hideOption("hide-value9")}
                    </div>
                  </div>
                  ${this.badge("keyboard")}
                </div>
                <div class="row end">
                  <button class="btn gray">${icon("sync", 22, 22)}Reset the values</button>
                </div>
              </div>
            </div>
          </div>
        </div>
        <div class="footer">
          <button class="btn primary big">Save</button>
          <button class="btn gray big">Cancel</button>
        </div>
      </section>
    </div>`;
  }

  render() {
    return html`${this.chrome()}
      <div class="work">${this.sidebar()}${this.workspace()}${this.dialog()}</div>`;
  }
}
